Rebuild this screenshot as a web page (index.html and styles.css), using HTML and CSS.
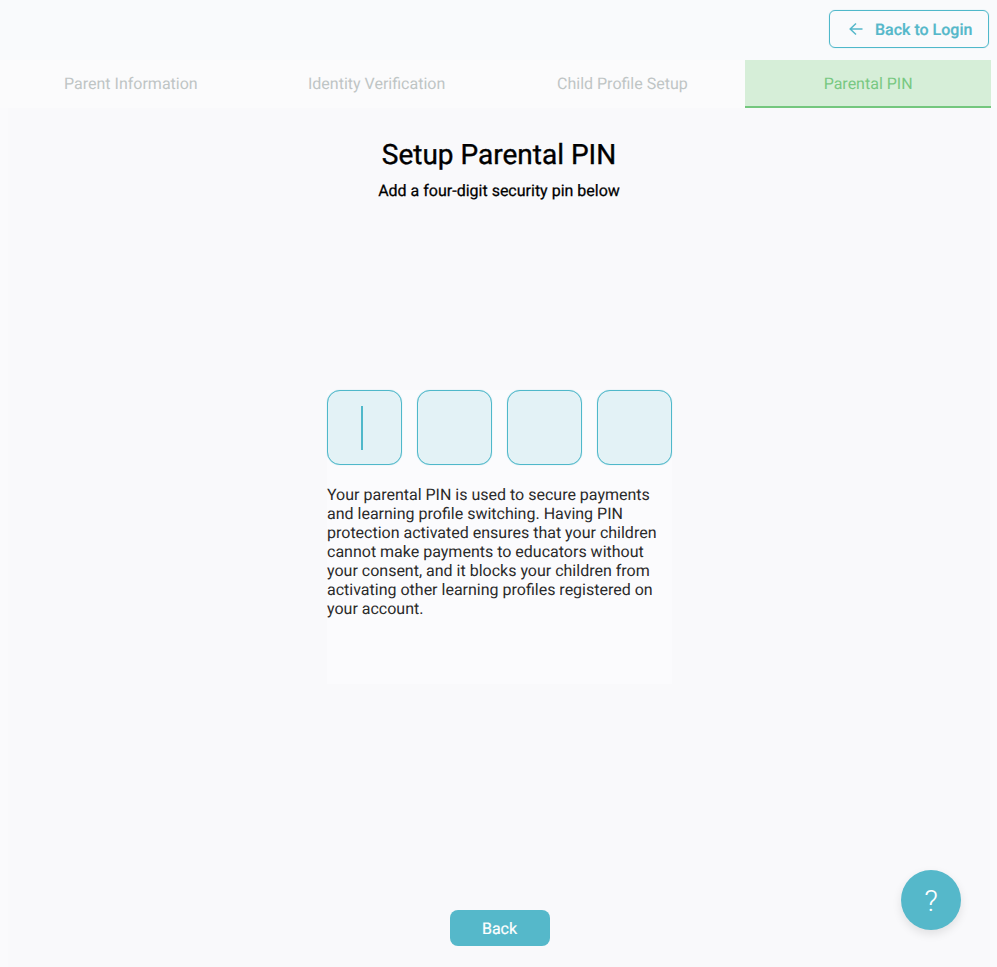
FILE: index.html
```html
<!DOCTYPE html>
<html lang="en">
<head>
<meta charset="utf-8">
<title>Setup Parental PIN</title>
<link rel="stylesheet" href="styles.css">
</head>
<body>
<div class="page">
  <header class="topbar">
    <button class="login-btn" type="button">
      <svg class="arrow" width="16" height="16" viewBox="0 0 16 16" fill="none" stroke="currentColor" stroke-width="1.5"><path d="M13.5 8H1.2M7 2.5 1.2 8 7 13.5"/></svg>
      <span>Back to Login</span>
    </button>
  </header>
  <nav class="tabs">
    <div class="tab">Parent Information</div>
    <div class="tab">Identity Verification</div>
    <div class="tab">Child Profile Setup</div>
    <div class="tab tab-active">Parental PIN</div>
  </nav>
  <main class="panel">
    <h1 class="title">Setup Parental PIN</h1>
    <p class="subtitle">Add a four-digit security pin below</p>
    <section class="pin-area">
      <div class="pin-row">
        <div class="pin-box"><span class="caret"></span></div>
        <div class="pin-box"></div>
        <div class="pin-box"></div>
        <div class="pin-box"></div>
      </div>
      <p class="info">Your parental PIN is used to secure payments and learning profile switching. Having PIN protection activated ensures that your children cannot make payments to educators without your consent, and it blocks your children from activating other learning profiles registered on your account.</p>
    </section>
    <button class="back-btn" type="button">Back</button>
  </main>
  <button class="help" type="button">?</button>
</div>
</body>
</html>
```

FILE: styles.css
```css
* { box-sizing: border-box; }
html, body { margin: 0; height: 100%; }
body {
  background: #fafafc;
  font-family: Roboto, "Liberation Sans", sans-serif;
  text-rendering: geometricPrecision;
  overflow: hidden;
}
.page {
  position: relative;
  height: 967px;
  display: flex;
  flex-direction: column;
}
.topbar {
  height: 60px;
  flex: none;
  display: flex;
  justify-content: flex-end;
  align-items: flex-start;
  padding: 10px 8px 0 0;
  background: #f9fafc;
}
.login-btn {
  width: 160px;
  height: 38px;
  display: flex;
  align-items: center;
  gap: 10px;
  padding: 0 0 0 19px;
  border: 1px solid #4fb8ca;
  border-radius: 6px;
  background: transparent;
  box-shadow: 0 0 1px rgba(79, 184, 202, 0.6);
  color: #55b8ca;
  font: 500 16px Roboto, sans-serif;
  text-rendering: geometricPrecision;
  -webkit-text-stroke: 0.2px #55b8ca;
}
.arrow { flex: none; }
.tabs {
  height: 48px;
  flex: none;
  display: grid;
  grid-template-columns: repeat(4, 245.75px);
  padding-left: 8px;
  background: #fbfbfc;
}
.tab {
  display: flex;
  align-items: center;
  justify-content: center;
  padding-bottom: 2px;
  font-size: 16px;
  color: #bfc5c5;
}
.tab-active {
  padding-bottom: 0;
  background: #d6eed8;
  color: #78c882;
  border-bottom: 2px solid #74c77e;
}
.panel {
  flex: 1;
  margin: 0 7px 0 8px;
  background: #f9f9fb;
  display: flex;
  flex-direction: column;
  align-items: center;
  padding-top: 29px;
}
.title {
  margin: 0;
  font-size: 28px;
  line-height: 36px;
  font-weight: 400;
  color: #000;
  -webkit-text-stroke: 0.35px #000;
}
.subtitle {
  margin: 8px 0 0;
  font-size: 16px;
  line-height: 20px;
  font-weight: 400;
  color: #000;
  -webkit-text-stroke: 0.25px #000;
}
.pin-area {
  width: 345px;
  height: 294px;
  margin-top: 189px;
  background: #fbfbfd;
}
.pin-row {
  display: flex;
  gap: 15px;
}
.pin-box {
  width: 75px;
  height: 75px;
  border: 1px solid #4fb8ca;
  border-radius: 13px;
  background: #e3f2f6;
  box-shadow: 0 0 1px rgba(79, 184, 202, 0.6);
  display: flex;
  align-items: center;
  justify-content: center;
  padding-right: 4px;
}
.caret {
  width: 2px;
  height: 44px;
  background: #4fb8ca;
}
.info {
  margin: 20px 0 0;
  padding-left: 0.5px;
  font-size: 16px;
  line-height: 19px;
  color: #2a2a2a;
}
.back-btn {
  margin-top: auto;
  margin-bottom: 21px;
  margin-left: 1px;
  width: 100px;
  height: 36px;
  border: 0;
  border-radius: 8px;
  background: #55b8ca;
  color: #fff;
  font: 400 16px Roboto, sans-serif;
  text-rendering: geometricPrecision;
  -webkit-text-stroke: 0.2px #fff;
}
.help {
  position: absolute;
  left: 901px;
  top: 870px;
  width: 60px;
  height: 60px;
  border: 0;
  border-radius: 50%;
  background: #55b8ca;
  color: #fff;
  font: 300 30px Roboto, sans-serif;
  box-shadow: 0 4px 10px rgba(0, 0, 0, 0.1);
}
```
